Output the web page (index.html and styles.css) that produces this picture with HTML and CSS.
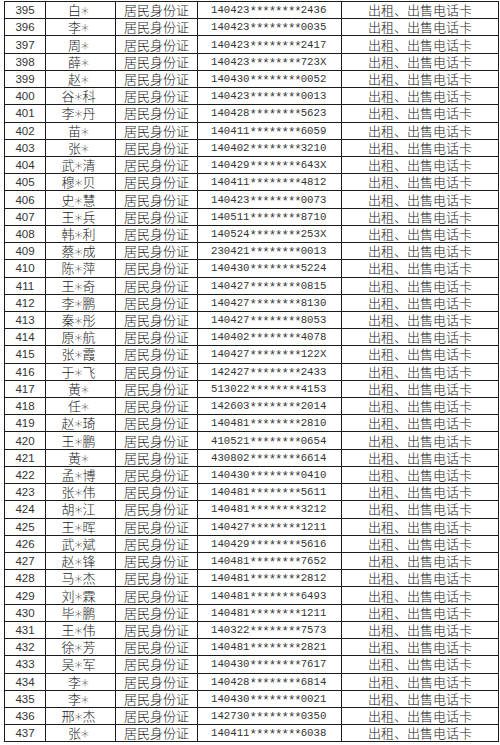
FILE: index.html
```html
<!DOCTYPE html>
<html lang="zh">
<head>
<meta charset="utf-8">
<link rel="stylesheet" href="styles.css">
</head>
<body>
<table class="list">
<tbody>
<tr><td class="no">395</td><td class="name">白<span class="star">*</span></td><td class="type">居民身份证</td><td class="id">140423<span class="mask">********</span>2436</td><td class="act">出租、出售电话卡</td></tr>
<tr><td class="no">396</td><td class="name">李<span class="star">*</span></td><td class="type">居民身份证</td><td class="id">140423<span class="mask">********</span>0035</td><td class="act">出租、出售电话卡</td></tr>
<tr><td class="no">397</td><td class="name">周<span class="star">*</span></td><td class="type">居民身份证</td><td class="id">140423<span class="mask">********</span>2417</td><td class="act">出租、出售电话卡</td></tr>
<tr><td class="no">398</td><td class="name">薛<span class="star">*</span></td><td class="type">居民身份证</td><td class="id">140423<span class="mask">********</span>723X</td><td class="act">出租、出售电话卡</td></tr>
<tr><td class="no">399</td><td class="name">赵<span class="star">*</span></td><td class="type">居民身份证</td><td class="id">140430<span class="mask">********</span>0052</td><td class="act">出租、出售电话卡</td></tr>
<tr><td class="no">400</td><td class="name">谷<span class="star">*</span>科</td><td class="type">居民身份证</td><td class="id">140423<span class="mask">********</span>0013</td><td class="act">出租、出售电话卡</td></tr>
<tr><td class="no">401</td><td class="name">李<span class="star">*</span>丹</td><td class="type">居民身份证</td><td class="id">140428<span class="mask">********</span>5623</td><td class="act">出租、出售电话卡</td></tr>
<tr><td class="no">402</td><td class="name">苗<span class="star">*</span></td><td class="type">居民身份证</td><td class="id">140411<span class="mask">********</span>6059</td><td class="act">出租、出售电话卡</td></tr>
<tr><td class="no">403</td><td class="name">张<span class="star">*</span></td><td class="type">居民身份证</td><td class="id">140402<span class="mask">********</span>3210</td><td class="act">出租、出售电话卡</td></tr>
<tr><td class="no">404</td><td class="name">武<span class="star">*</span>清</td><td class="type">居民身份证</td><td class="id">140429<span class="mask">********</span>643X</td><td class="act">出租、出售电话卡</td></tr>
<tr><td class="no">405</td><td class="name">穆<span class="star">*</span>贝</td><td class="type">居民身份证</td><td class="id">140411<span class="mask">********</span>4812</td><td class="act">出租、出售电话卡</td></tr>
<tr><td class="no">406</td><td class="name">史<span class="star">*</span>慧</td><td class="type">居民身份证</td><td class="id">140423<span class="mask">********</span>0073</td><td class="act">出租、出售电话卡</td></tr>
<tr><td class="no">407</td><td class="name">王<span class="star">*</span>兵</td><td class="type">居民身份证</td><td class="id">140511<span class="mask">********</span>8710</td><td class="act">出租、出售电话卡</td></tr>
<tr><td class="no">408</td><td class="name">韩<span class="star">*</span>利</td><td class="type">居民身份证</td><td class="id">140524<span class="mask">********</span>253X</td><td class="act">出租、出售电话卡</td></tr>
<tr><td class="no">409</td><td class="name">蔡<span class="star">*</span>成</td><td class="type">居民身份证</td><td class="id">230421<span class="mask">********</span>0013</td><td class="act">出租、出售电话卡</td></tr>
<tr><td class="no">410</td><td class="name">陈<span class="star">*</span>萍</td><td class="type">居民身份证</td><td class="id">140430<span class="mask">********</span>5224</td><td class="act">出租、出售电话卡</td></tr>
<tr><td class="no">411</td><td class="name">王<span class="star">*</span>奇</td><td class="type">居民身份证</td><td class="id">140427<span class="mask">********</span>0815</td><td class="act">出租、出售电话卡</td></tr>
<tr><td class="no">412</td><td class="name">李<span class="star">*</span>鹏</td><td class="type">居民身份证</td><td class="id">140427<span class="mask">********</span>8130</td><td class="act">出租、出售电话卡</td></tr>
<tr><td class="no">413</td><td class="name">秦<span class="star">*</span>彤</td><td class="type">居民身份证</td><td class="id">140427<span class="mask">********</span>8053</td><td class="act">出租、出售电话卡</td></tr>
<tr><td class="no">414</td><td class="name">原<span class="star">*</span>航</td><td class="type">居民身份证</td><td class="id">140402<span class="mask">********</span>4078</td><td class="act">出租、出售电话卡</td></tr>
<tr><td class="no">415</td><td class="name">张<span class="star">*</span>霞</td><td class="type">居民身份证</td><td class="id">140427<span class="mask">********</span>122X</td><td class="act">出租、出售电话卡</td></tr>
<tr><td class="no">416</td><td class="name">于<span class="star">*</span>飞</td><td class="type">居民身份证</td><td class="id">142427<span class="mask">********</span>2433</td><td class="act">出租、出售电话卡</td></tr>
<tr><td class="no">417</td><td class="name">黄<span class="star">*</span></td><td class="type">居民身份证</td><td class="id">513022<span class="mask">********</span>4153</td><td class="act">出租、出售电话卡</td></tr>
<tr><td class="no">418</td><td class="name">任<span class="star">*</span></td><td class="type">居民身份证</td><td class="id">142603<span class="mask">********</span>2014</td><td class="act">出租、出售电话卡</td></tr>
<tr><td class="no">419</td><td class="name">赵<span class="star">*</span>琦</td><td class="type">居民身份证</td><td class="id">140481<span class="mask">********</span>2810</td><td class="act">出租、出售电话卡</td></tr>
<tr><td class="no">420</td><td class="name">王<span class="star">*</span>鹏</td><td class="type">居民身份证</td><td class="id">410521<span class="mask">********</span>0654</td><td class="act">出租、出售电话卡</td></tr>
<tr><td class="no">421</td><td class="name">黄<span class="star">*</span></td><td class="type">居民身份证</td><td class="id">430802<span class="mask">********</span>6614</td><td class="act">出租、出售电话卡</td></tr>
<tr><td class="no">422</td><td class="name">孟<span class="star">*</span>博</td><td class="type">居民身份证</td><td class="id">140430<span class="mask">********</span>0410</td><td class="act">出租、出售电话卡</td></tr>
<tr><td class="no">423</td><td class="name">张<span class="star">*</span>伟</td><td class="type">居民身份证</td><td class="id">140481<span class="mask">********</span>5611</td><td class="act">出租、出售电话卡</td></tr>
<tr><td class="no">424</td><td class="name">胡<span class="star">*</span>江</td><td class="type">居民身份证</td><td class="id">140481<span class="mask">********</span>3212</td><td class="act">出租、出售电话卡</td></tr>
<tr><td class="no">425</td><td class="name">王<span class="star">*</span>晖</td><td class="type">居民身份证</td><td class="id">140427<span class="mask">********</span>1211</td><td class="act">出租、出售电话卡</td></tr>
<tr><td class="no">426</td><td class="name">武<span class="star">*</span>斌</td><td class="type">居民身份证</td><td class="id">140429<span class="mask">********</span>5616</td><td class="act">出租、出售电话卡</td></tr>
<tr><td class="no">427</td><td class="name">赵<span class="star">*</span>锋</td><td class="type">居民身份证</td><td class="id">140481<span class="mask">********</span>7652</td><td class="act">出租、出售电话卡</td></tr>
<tr><td class="no">428</td><td class="name">马<span class="star">*</span>杰</td><td class="type">居民身份证</td><td class="id">140481<span class="mask">********</span>2812</td><td class="act">出租、出售电话卡</td></tr>
<tr><td class="no">429</td><td class="name">刘<span class="star">*</span>霖</td><td class="type">居民身份证</td><td class="id">140481<span class="mask">********</span>6493</td><td class="act">出租、出售电话卡</td></tr>
<tr><td class="no">430</td><td class="name">毕<span class="star">*</span>鹏</td><td class="type">居民身份证</td><td class="id">140481<span class="mask">********</span>1211</td><td class="act">出租、出售电话卡</td></tr>
<tr><td class="no">431</td><td class="name">王<span class="star">*</span>伟</td><td class="type">居民身份证</td><td class="id">140322<span class="mask">********</span>7573</td><td class="act">出租、出售电话卡</td></tr>
<tr><td class="no">432</td><td class="name">徐<span class="star">*</span>芳</td><td class="type">居民身份证</td><td class="id">140481<span class="mask">********</span>2821</td><td class="act">出租、出售电话卡</td></tr>
<tr><td class="no">433</td><td class="name">吴<span class="star">*</span>军</td><td class="type">居民身份证</td><td class="id">140430<span class="mask">********</span>7617</td><td class="act">出租、出售电话卡</td></tr>
<tr><td class="no">434</td><td class="name">李<span class="star">*</span></td><td class="type">居民身份证</td><td class="id">140428<span class="mask">********</span>6814</td><td class="act">出租、出售电话卡</td></tr>
<tr><td class="no">435</td><td class="name">李<span class="star">*</span></td><td class="type">居民身份证</td><td class="id">140430<span class="mask">********</span>0021</td><td class="act">出租、出售电话卡</td></tr>
<tr><td class="no">436</td><td class="name">邢<span class="star">*</span>杰</td><td class="type">居民身份证</td><td class="id">142730<span class="mask">********</span>0350</td><td class="act">出租、出售电话卡</td></tr>
<tr><td class="no">437</td><td class="name">张<span class="star">*</span></td><td class="type">居民身份证</td><td class="id">140411<span class="mask">********</span>6038</td><td class="act">出租、出售电话卡</td></tr>
</tbody>
</table>
</body>
</html>
```
FILE: styles.css
```css
html, body {
  margin: 0;
  padding: 0;
  background: #ffffff;
}
body {
  padding: 1px 0 0 4px;
  font-family: "Noto Sans CJK SC", sans-serif;
  color: #222222;
}
.list {
  border-collapse: collapse;
  table-layout: fixed;
  width: 494px;
}
.list td {
  border: 1px solid #1a1a1a;
  padding: 0;
  height: 17.23px;
  box-sizing: border-box;
  text-align: center;
  vertical-align: middle;
  white-space: nowrap;
  line-height: 14px;
}
.list td.no {
  width: 41px;
  font-family: "Liberation Sans", sans-serif;
  font-size: 11.5px;
  color: #333333;
}
.list td.name {
  width: 70px;
  padding-right: 4px;
}
.list td.type {
  width: 82px;
}
.list td.act {
  width: 157px;
}
.name, .type, .act {
  font-family: "Noto Sans CJK SC", sans-serif;
  font-size: 13px;
  font-weight: 300;
}
.star {
  font-family: "DejaVu Sans", sans-serif;
  font-size: 16px;
  line-height: 14px;
  position: relative;
  top: 4px;
}
.list td.id {
  width: 144px;
  text-align: left;
  padding-left: 13px;
  font-family: "Liberation Mono", monospace;
  font-size: 10.7px;
  color: #333333;
}
.mask {
  font-size: 12.5px;
  letter-spacing: -1.1px;
  position: relative;
  top: 2px;
}
```
